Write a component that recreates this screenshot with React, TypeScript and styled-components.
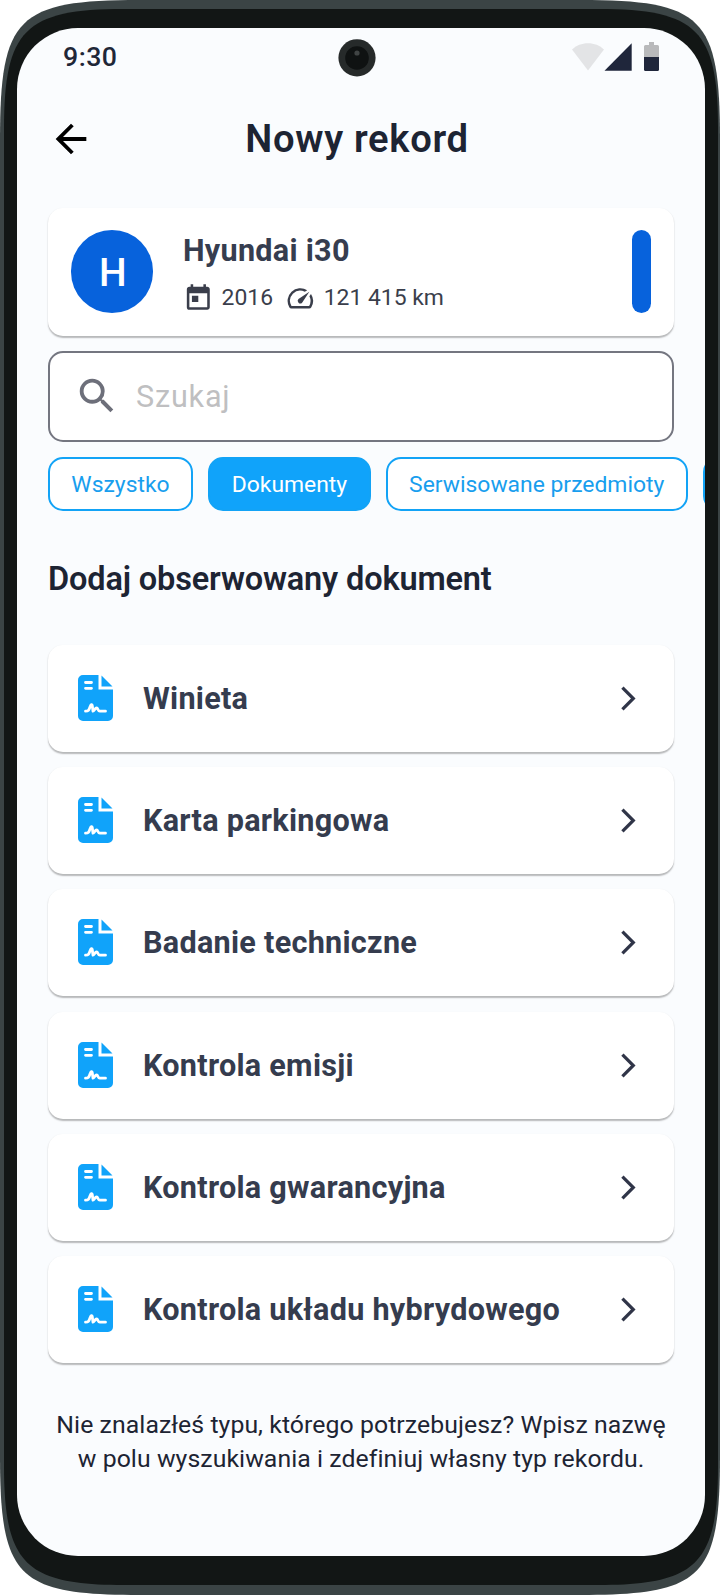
import React from "react";
import styled, { createGlobalStyle } from "styled-components";
import { MdArrowBack, MdOutlineSpeed, MdSearch, MdToday } from "react-icons/md";

const GlobalStyle = createGlobalStyle`
  *, *::before, *::after { box-sizing: border-box; }
  body { margin: 0; background: #fff; font-family: Roboto, "Liberation Sans", sans-serif; color: #1d2433; }
  h1, h2, h3, p { margin: 0; }
  button { font: inherit; cursor: pointer; }
  svg { display: block; flex: none; }
`;

const Phone = styled.div`
  position: relative;
  width: 720px;
  height: 1595px;
  padding: 28px 15px 39.5px 17px;
  overflow: hidden;
`;

const Bezel = styled.svg`
  position: absolute;
  inset: 0;
`;

const Screen = styled.main`
  position: relative;
  height: 1527.5px;
  border-radius: 61px;
  background: #fafcfe;
  overflow: hidden;
`;

const Camera = styled.svg`
  position: absolute;
  left: 321px;
  top: 10px;
`;

const StatusBar = styled.header`
  display: flex;
  align-items: center;
  justify-content: space-between;
  height: 58px;
  padding: 0 46px 0 46px;
  font-size: 26.7px;
  font-weight: 500;
  letter-spacing: 0.5px;
  color: #1f2738;
`;

const TopBar = styled.nav`
  display: grid;
  grid-template-columns: 46px 1fr 54px;
  align-items: center;
  height: 105px;
  padding: 0 31px;
`;

const BackButton = styled.button`
  padding: 0;
  border: 0;
  background: none;
  color: #000;
`;

const Title = styled.h1`
  text-align: center;
  font-size: 38.2px;
  line-height: 46px;
  font-weight: 600;
  letter-spacing: 0.7px;
`;

const Content = styled.div`
  display: flex;
  flex-direction: column;
  gap: 15.2px;
  padding: 16.5px 31px 0;
`;

const Card = styled.article`
  display: flex;
  align-items: center;
  width: 626px;
  background: #fff;
  border-radius: 15px;
  box-shadow: 0 1.5px 1.5px rgba(0, 0, 0, 0.27);
`;

const VehicleCard = styled(Card)`
  height: 128px;
  padding: 0 23px 0 22.5px;
`;

const Avatar = styled.div`
  display: grid;
  place-items: center;
  width: 82.5px;
  height: 82.5px;
  padding: 3px 0 0 2px;
  border-radius: 50%;
  background: #0762dc;
  color: #fff;
  font-size: 39px;
  font-weight: 500;
`;

const VehicleInfo = styled.div`
  flex: 1;
  margin-left: 30px;
  color: #363d4f;
`;

const VehicleName = styled.h3`
  font-size: 30.6px;
  line-height: 40px;
  font-weight: 700;
  letter-spacing: 0.27px;
`;

const Facts = styled.div`
  display: flex;
  align-items: center;
  margin-top: 12px;
  margin-bottom: -1px;
  font-size: 22.9px;
  line-height: 30px;
  color: #3a3e4b;
`;

const Fact = styled.span<{ $gap: number }>`
  display: flex;
  align-items: center;
  gap: ${(p) => p.$gap}px;
  margin-right: 12px;
`;

const ColorBar = styled.div`
  width: 19.5px;
  height: 82.5px;
  border-radius: 10px;
  background: #0762dc;
`;

const SearchBox = styled.label`
  display: flex;
  align-items: center;
  gap: 16px;
  width: 626px;
  height: 91.6px;
  padding-left: 24px;
  border: 2px solid #747680;
  border-radius: 15px;
  background: #fff;
  color: #6d6f7a;
`;

const SearchInput = styled.input`
  flex: 1;
  padding: 0;
  border: 0;
  outline: 0;
  background: none;
  font: 400 30.6px Roboto, sans-serif;
  letter-spacing: 0.8px;
  &::placeholder { color: #bfbfc1; opacity: 1; }
`;

const Chips = styled.div`
  display: flex;
  gap: 15.3px;
  height: 53.5px;
`;

const Chip = styled.button<{ $active?: boolean; $width: number }>`
  flex: none;
  width: ${(p) => p.$width}px;
  padding: 0;
  border: 2px solid #12a3f6;
  border-radius: 15px;
  background: ${(p) => (p.$active ? "#10a3fa" : "#fff")};
  color: ${(p) => (p.$active ? "#fff" : "#189eee")};
  font-size: 22.9px;
  white-space: nowrap;
`;

const SectionTitle = styled.h2`
  margin: 27.6px 0 25px;
  font-size: 32.5px;
  line-height: 51px;
  font-weight: 600;
  letter-spacing: -0.15px;
`;

const Row = styled(Card)`
  height: 107px;
  padding: 0 31px 0 30px;
`;

const RowTitle = styled.h3`
  flex: 1;
  margin-left: 30px;
  padding-top: 1px;
  font-size: 30.6px;
  line-height: 40px;
  font-weight: 700;
  letter-spacing: 0.27px;
  color: #353c4e;
`;

const Hint = styled.p`
  margin-top: 30px;
  text-align: center;
  white-space: nowrap;
  font-size: 24.8px;
  line-height: 34.4px;
  letter-spacing: 0.07px;
`;

const documents = [
  "Winieta",
  "Karta parkingowa",
  "Badanie techniczne",
  "Kontrola emisji",
  "Kontrola gwarancyjna",
  "Kontrola układu hybrydowego",
];

const filters = [
  { label: "Wszystko", width: 145 },
  { label: "Dokumenty", width: 162.3 },
  { label: "Serwisowane przedmioty", width: 301.7 },
  { label: "", width: 120 },
];

const StatusIcons = () => (
  <svg width="88" height="30" viewBox="571 42 88 30">
    <path d="M572 49.5C580 41 596 41 604 49.5L588 70.5Z" fill="#e3e4e6" />
    <path d="M604.5 70.7 631.7 43.2V70.7Z" fill="#1f263b" />
    <path d="M649 42h5v3h3.500a1.500 1.500 0 0 1 1.500 1.500V57h-15V46.500a1.500 1.500 0 0 1 1.500-1.500H649Z" fill="#b8b9bb" />
    <path d="M644 57h15v12.500a1.500 1.500 0 0 1-1.500 1.500h-12a1.500 1.500 0 0 1-1.500-1.500Z" fill="#1f263b" />
  </svg>
);

const DocumentIcon = () => (
  <svg width="35" height="47" viewBox="0 0 35 47">
    <path d="M5 0H20.500V14.500H35V41a5 5 0 0 1-5 5H5a5 5 0 0 1-5-5V5a5 5 0 0 1 5-5Z" fill="#10a3fa" />
    <path d="M23.500.5 34.500 11.500H23.500Z" fill="#10a3fa" />
    <g fill="none" stroke="#fff" strokeWidth="2.800" strokeLinecap="round" strokeLinejoin="round">
      <path d="M7.500 7.500h6M7.500 13.300h6" />
      <path d="M7.500 36.200c3 0 3.500-1.200 4.500-4.200s2-3 2.300-1.200l.7 5.400c1.200 0 2-3.200 3.600-3.200s1.200 3.200 3.200 3.200h5.700" />
    </g>
  </svg>
);

const Chevron = () => (
  <svg width="29" height="29" viewBox="0 0 29 29" fill="none" stroke="#303548" strokeWidth="3.200">
    <path d="M8.400 3.600 19.300 14.500 8.400 25.400" />
  </svg>
);

export default function App() {
  return (
    <>
      <GlobalStyle />
      <Phone>
        <Bezel width="720" height="1595" viewBox="0 0 720 1595" aria-hidden="true">
          <path
            d="M0 140C0 17 17 0 140 0H580C703 0 720 17 720 140V1455C720 1578 703 1595 580 1595H140C17 1595 0 1578 0 1455Z"
            fill="#3b4445"
          />
          <path
            d="M4 129C4 30 25 9 124 9H598C697 9 718 30 718 129V1465C718 1564 697 1585 598 1585H124C25 1585 4 1564 4 1465Z"
            fill="#121615"
          />
        </Bezel>
        <Screen>
          <Camera width="38" height="39" viewBox="0 0 38 39" aria-hidden="true">
            <circle cx="19" cy="19.800" r="18.600" fill="#262a2a" />
            <circle cx="19" cy="20" r="11.800" fill="#0f1212" />
            <circle cx="19" cy="15" r="2.600" fill="#404444" />
          </Camera>
          <StatusBar>
            <span>9:30</span>
            <StatusIcons />
          </StatusBar>
          <TopBar>
            <BackButton aria-label="Wstecz">
              <MdArrowBack size={46} />
            </BackButton>
            <Title>Nowy rekord</Title>
          </TopBar>
          <Content>
            <VehicleCard>
              <Avatar>H</Avatar>
              <VehicleInfo>
                <VehicleName>Hyundai i30</VehicleName>
                <Facts>
                  <Fact $gap={8}>
                    <MdToday size={30.6} />
                    2016
                  </Fact>
                  <Fact $gap={8}>
                    <MdOutlineSpeed size={30.6} />
                    121 415 km
                  </Fact>
                </Facts>
              </VehicleInfo>
              <ColorBar />
            </VehicleCard>
            <SearchBox>
              <MdSearch size={46} />
              <SearchInput placeholder="Szukaj" />
            </SearchBox>
            <Chips>
              {filters.map((f) => (
                <Chip key={f.label} $width={f.width} $active={f.label === "Dokumenty"}>
                  {f.label}
                </Chip>
              ))}
            </Chips>
            <SectionTitle>Dodaj obserwowany dokument</SectionTitle>
            {documents.map((name) => (
              <Row key={name}>
                <DocumentIcon />
                <RowTitle>{name}</RowTitle>
                <Chevron />
              </Row>
            ))}
            <Hint>
              Nie znalazłeś typu, którego potrzebujesz? Wpisz nazwę
              <br />w polu wyszukiwania i zdefiniuj własny typ rekordu.
            </Hint>
          </Content>
        </Screen>
      </Phone>
    </>
  );
}
